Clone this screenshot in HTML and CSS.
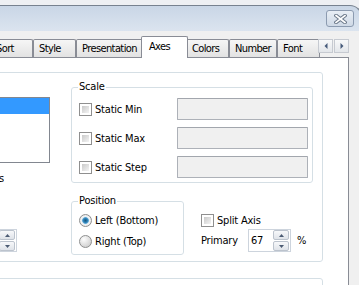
FILE: index.html
```html
<!DOCTYPE html>
<html lang="en">
<head>
    <meta charset="UTF-8">
    <title>Chart Properties - Axes</title>
    <link rel="stylesheet" href="styles.css">
</head>
<body>
    <div class="window">
        <div class="titlebar">
            <button class="close-btn" type="button">
                <svg width="13" height="10" viewBox="0 0 13 10">
                    <path d="M2 1.5 L11 8.5 M11 1.5 L2 8.5" stroke="#6d7a8b" stroke-width="3.6" stroke-linecap="square"/>
                    <path d="M2 1.5 L11 8.5 M11 1.5 L2 8.5" stroke="#ffffff" stroke-width="1.6" stroke-linecap="square"/>
                </svg>
            </button>
        </div>

        <div class="client">
            <!-- Tabs -->
            <div class="tabstrip">
                <div class="tab">Sort</div>
                <div class="tab">Style</div>
                <div class="tab">Presentation</div>
                <div class="tab active">Axes</div>
                <div class="tab">Colors</div>
                <div class="tab">Number</div>
                <div class="tab">Font</div>
                <div class="tab-scroll">
                    <span class="scroll-btn">
                        <svg width="4" height="6" viewBox="0 0 4 6"><polygon points="3.5,0 0.5,3 3.5,6" fill="#465a7a"/></svg>
                    </span>
                    <span class="scroll-btn">
                        <svg width="4" height="6" viewBox="0 0 4 6"><polygon points="0.5,0 3.5,3 0.5,6" fill="#465a7a"/></svg>
                    </span>
                </div>
            </div>

            <!-- Axes page -->
            <div class="tab-page">
                <div class="group group-axis">
                    <div class="left-col">
                        <div class="listbox">
                            <div class="list-item selected"></div>
                        </div>
                        <div class="cut-label">Show Labels</div>
                        <div class="spin">
                            <span class="spin-value"></span>
                            <span class="spin-btns">
                                <span class="spin-btn"><svg width="5" height="3" viewBox="0 0 5 3"><polygon points="0,3 2.5,0 5,3" fill="#4c5b73"/></svg></span>
                                <span class="spin-btn"><svg width="5" height="3" viewBox="0 0 5 3"><polygon points="0,0 2.5,3 5,0" fill="#4c5b73"/></svg></span>
                            </span>
                        </div>
                    </div>

                    <div class="right-col">
                        <fieldset class="groupbox scale">
                            <legend>Scale</legend>
                            <div class="scale-row">
                                <label class="check"><span class="checkbox"></span>Static Min</label>
                                <span class="textfield"></span>
                            </div>
                            <div class="scale-row">
                                <label class="check"><span class="checkbox"></span>Static Max</label>
                                <span class="textfield"></span>
                            </div>
                            <div class="scale-row">
                                <label class="check"><span class="checkbox"></span>Static Step</label>
                                <span class="textfield"></span>
                            </div>
                        </fieldset>

                        <div class="bottom-row">
                            <fieldset class="groupbox position">
                                <legend>Position</legend>
                                <label class="radio-row"><span class="radio checked"></span>Left (Bottom)</label>
                                <label class="radio-row"><span class="radio"></span>Right (Top)</label>
                            </fieldset>

                            <div class="split">
                                <label class="check"><span class="checkbox"></span>Split Axis</label>
                                <div class="primary-row">
                                    <span class="primary-label">Primary</span>
                                    <div class="spin">
                                        <span class="spin-value">67</span>
                                        <span class="spin-btns">
                                            <span class="spin-btn"><svg width="5" height="3" viewBox="0 0 5 3"><polygon points="0,3 2.5,0 5,3" fill="#4c5b73"/></svg></span>
                                            <span class="spin-btn"><svg width="5" height="3" viewBox="0 0 5 3"><polygon points="0,0 2.5,3 5,0" fill="#4c5b73"/></svg></span>
                                        </span>
                                    </div>
                                    <span class="percent">%</span>
                                </div>
                            </div>
                        </div>
                    </div>
                </div>

                <div class="group group-next"></div>
            </div>
        </div>
    </div>
</body>
</html>
```

FILE: styles.css
```css
body {
    margin: 0;
    width: 359px;
    height: 285px;
    overflow: hidden;
    background-color: #eef0f3;
    font-family: "DejaVu Sans Condensed", "Liberation Sans", Arial, sans-serif;
    font-size: 11px;
    letter-spacing: -0.2px;
    color: #000;
}

.window {
    margin: 5px 0 0 -80px;
    width: 442px;
    height: 290px;
    box-sizing: border-box;
    border-top: 1px solid #77828f;
    border-right: 1px solid #77828f;
    border-top-right-radius: 12px;
    background: linear-gradient(#c9d6e6, #dbe4ef 25px, #dbe4ef);
    overflow: hidden;
}

.titlebar {
    height: 25px;
    display: flex;
    justify-content: flex-end;
    align-items: flex-start;
}

.close-btn {
    margin: 4px 7px 0 0;
    width: 28px;
    height: 17px;
    padding: 0;
    border: 1px solid #8c9bb0;
    border-radius: 3px;
    background: linear-gradient(#e8eef5, #cfd9e6);
    display: flex;
    align-items: center;
    justify-content: center;
}

.client {
    background-color: #f0f0f0;
    padding: 5px 12px 0 0;
    height: 260px;
}

/* tabs */
.tabstrip {
    position: relative;
    display: flex;
    align-items: flex-end;
    height: 21px;
    padding-left: 70px;
}

.tab {
    box-sizing: border-box;
    min-width: 43px;
    height: 18px;
    padding: 0 5px;
    border: 1px solid #898c95;
    border-bottom: 0;
    border-radius: 2px 2px 0 0;
    background: linear-gradient(#f6f6f6, #e2e2e2);
    line-height: 17px;
    letter-spacing: -0.6px;
    white-space: nowrap;
}

.tab.active {
    position: relative;
    z-index: 2;
    height: 22px;
    min-width: 47px;
    margin: 0 -2px -1px;
    padding: 0 7px;
    background: #fff;
    line-height: 19px;
}

.tab-scroll {
    position: absolute;
    right: 0;
    top: 3px;
    display: flex;
    gap: 1px;
    z-index: 3;
}

.scroll-btn {
    width: 15px;
    height: 14px;
    box-sizing: border-box;
    border: 1px solid #c6cad1;
    background: linear-gradient(#f8f9fa, #e3e6ea);
    display: flex;
    align-items: center;
    justify-content: center;
}

/* page */
.tab-page {
    background-color: #fff;
    border: 1px solid #898c95;
    padding: 14px 25px 0 10px;
    height: 240px;
}

.group {
    border: 1px solid #d5dfe5;
    border-radius: 3px;
}

.group-axis {
    display: flex;
    align-items: flex-start;
    padding: 0 9px 6px;
}

.group-next {
    margin-top: 16px;
    height: 40px;
}

.left-col {
    width: 109px;
    flex: none;
}

.right-col {
    width: 242px;
    flex: none;
    margin: 8px 0 0 21px;
}

.listbox {
    margin-top: 24px;
    height: 66px;
    box-sizing: border-box;
    border: 1px solid #828790;
    background: #fff;
}

.list-item {
    height: 16px;
}

.list-item.selected {
    background-color: #3399ff;
}

.cut-label {
    margin-top: 10px;
    width: 63px;
    text-align: right;
    line-height: 12px;
    white-space: nowrap;
    overflow: hidden;
}

.left-col .spin {
    margin: 44px 0 0 33px;
}

/* spinner */
.spin {
    display: flex;
    box-sizing: border-box;
    width: 43px;
    height: 23px;
    padding: 0 1px;
    border: 1px solid #cdd4dd;
    background: #fff;
}

.spin-value {
    flex: 1;
    padding-left: 1px;
    line-height: 21px;
}

.spin-btns {
    width: 16px;
    display: flex;
    flex-direction: column;
    gap: 1px;
}

.spin-btn {
    height: 10px;
    box-sizing: border-box;
    border: 1px solid #bcc3cd;
    border-radius: 2px;
    background: linear-gradient(#f7f8fa, #dfe3e9);
    display: flex;
    align-items: center;
    justify-content: center;
}

/* group boxes */
.groupbox {
    margin: 0;
    min-width: 0;
    box-sizing: border-box;
    border: 1px solid #d5dfe5;
    border-radius: 3px;
}

.groupbox legend {
    padding: 0 1px;
    margin-left: -1px;
    line-height: 12px;
}

.scale {
    padding: 5px 4px 4px 7px;
}

.scale-row {
    display: flex;
    align-items: center;
    height: 22px;
}

.scale-row + .scale-row {
    margin-top: 7px;
}

.scale-row .check {
    width: 98px;
}

.textfield {
    flex: 1;
    height: 22px;
    box-sizing: border-box;
    border: 1px solid #adb1b8;
    border-top-color: #a2a6ad;
    border-radius: 1px;
    background: #f0f0f0;
}

.check {
    display: flex;
    align-items: center;
    gap: 3px;
    line-height: 13px;
    white-space: nowrap;
}

.checkbox {
    flex: none;
    width: 13px;
    height: 13px;
    box-sizing: border-box;
    padding: 2px;
    border: 1px solid #8f8f8f;
    background: linear-gradient(135deg, #c9c9c9, #f4f4f4) content-box, #fff;
}

.bottom-row {
    display: flex;
    align-items: flex-start;
    margin-top: 12px;
}

.position {
    width: 113px;
    padding: 7px 4px 6px 7px;
}

.radio-row {
    display: flex;
    align-items: center;
    gap: 3px;
    height: 13px;
    line-height: 13px;
    white-space: nowrap;
}

.radio-row + .radio-row {
    margin-top: 8px;
}

.radio {
    flex: none;
    width: 13px;
    height: 13px;
    box-sizing: border-box;
    border: 1px solid #8e8f8f;
    border-radius: 50%;
    background: radial-gradient(circle at 35% 30%, #fdfdfd, #d2d2d2 75%);
}

.radio.checked {
    background: radial-gradient(circle, #17577f 0, #2c7fb3 2px, #5ea8d6 3px, #e4edf3 3.7px, #f4f4f4 4.5px, #cfcfcf 100%);
}

.split {
    margin-left: 17px;
    padding-top: 19px;
}

.primary-row {
    display: flex;
    align-items: center;
    margin-top: 2px;
}

.primary-label {
    width: 47px;
}

.percent {
    margin-left: 6px;
}
```
